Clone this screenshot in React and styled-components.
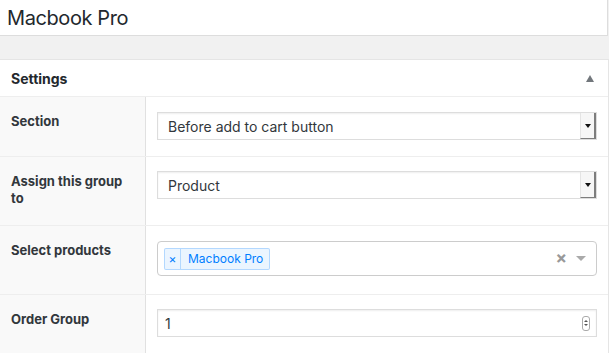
import React from "react";
import styled, { createGlobalStyle } from "styled-components";

const GlobalStyle = createGlobalStyle`
  html, body {
    margin: 0;
    padding: 0;
    background: #f1f1f1;
    font-family: Inter, "Noto Sans", "Liberation Sans", sans-serif;
    color: #23282d;
  }
`;

const Page = styled.div`
  width: 609px;
  height: 353px;
  overflow: hidden;
  background: #f1f1f1;
`;

const TitleBox = styled.div`
  height: 35px;
  margin-right: 1px;
  background: #fff;
  border: 1px solid #ddd;
  border-left: none;
  border-top: none;
  padding-left: 7px;
  display: flex;
  align-items: center;
  font-size: 20px;
  letter-spacing: -0.4px;
  color: #23282d;
`;

const Panel = styled.div`
  margin-top: 23px;
  background: #fff;
  border: 1px solid #e5e5e5;
  border-left: none;
  border-bottom: none;
`;

const PanelHeader = styled.div`
  height: 36px;
  padding: 0 11px;
  display: flex;
  align-items: center;
  justify-content: space-between;
  border-bottom: 1px solid #eee;
  font-size: 14px;
  font-weight: 700;
  color: #23282d;
`;

const Toggle = styled.span`
  width: 0;
  height: 0;
  margin-right: 3px;
  border-left: 4px solid transparent;
  border-right: 4px solid transparent;
  border-bottom: 7px solid #72777c;
`;

const Row = styled.div`
  display: grid;
  grid-template-columns: 146px 1fr;
  border-bottom: 1px solid #eee;
`;

const Label = styled.div`
  background: #f9f9f9;
  border-right: 1px solid #e1e1e1;
  padding: 16px 11px 18px;
  font-size: 13px;
  line-height: 17px;
  font-weight: 700;
  color: #32373c;
`;

const Field = styled.div`
  padding: ${(p) => p.$top ?? 15}px 11px ${(p) => p.$bottom ?? 16}px;
`;

const SelectBox = styled.div`
  height: 26px;
  border: 1px solid #ddd;
  box-shadow: inset 0 1px 2px rgba(0, 0, 0, 0.07);
  display: flex;
  align-items: center;
  font-size: 14px;
  color: #32373c;
`;

const SelectText = styled.span`
  flex: 1;
  padding-left: 10px;
`;

const SelectArrow = styled.span`
  width: 13px;
  height: 25px;
  align-self: flex-start;
  background: #f6f6f6;
  border-right: 2px solid #7d7d7d;
  border-bottom: 1px solid #7d7d7d;
  border-left: 1px solid #e4e4e4;
  display: flex;
  align-items: center;
  justify-content: center;
  &::after {
    content: "";
    border-left: 3px solid transparent;
    border-right: 3px solid transparent;
    border-top: 4px solid #111;
  }
`;

const MultiSelect = styled.div`
  height: 33px;
  border: 1px solid #ccc;
  border-radius: 4px;
  display: flex;
  align-items: center;
  padding: 0 10px 0 6px;
  gap: 8px;
`;

const Tag = styled.div`
  display: flex;
  height: 20px;
  background: rgba(0, 126, 255, 0.08);
  border: 1px solid rgba(0, 126, 255, 0.24);
  border-radius: 2px;
  color: #007eff;
  font-size: 12px;
  line-height: 20px;
`;

const TagRemove = styled.span`
  width: 15px;
  text-align: center;
  border-right: 1px solid rgba(0, 126, 255, 0.24);
  font-size: 12px;
`;

const TagLabel = styled.span`
  padding: 0 6px 0 7px;
`;

const Spacer = styled.div`
  flex: 1;
`;

const Clear = styled.span`
  color: #999;
  font-size: 17px;
  font-weight: 700;
  line-height: 1;
`;

const Caret = styled.span`
  border-left: 5px solid transparent;
  border-right: 5px solid transparent;
  border-top: 5px solid #aaa;
  margin-left: 1px;
`;

const NumberInput = styled.div`
  height: 26px;
  border: 1px solid #ddd;
  box-shadow: inset 0 1px 2px rgba(0, 0, 0, 0.07);
  display: flex;
  align-items: center;
  padding: 0 6px 0 7px;
  font-size: 14px;
  color: #32373c;
`;

const Spinner = styled.span`
  width: 6px;
  height: 13px;
  border: 1px solid #aaa;
  border-radius: 3px;
  display: flex;
  flex-direction: column;
  align-items: center;
  justify-content: center;
  gap: 2px;
  &::before,
  &::after {
    content: "";
    border-left: 2px solid transparent;
    border-right: 2px solid transparent;
  }
  &::before {
    border-bottom: 2px solid #555;
  }
  &::after {
    border-top: 2px solid #555;
  }
`;

const Select = ({ value }) => (
  <SelectBox>
    <SelectText>{value}</SelectText>
    <SelectArrow />
  </SelectBox>
);

export default function App() {
  return (
    <Page>
      <GlobalStyle />
      <TitleBox>Macbook Pro</TitleBox>
      <Panel>
        <PanelHeader>
          Settings
          <Toggle />
        </PanelHeader>
        <Row>
          <Label>Section</Label>
          <Field>
            <Select value="Before add to cart button" />
          </Field>
        </Row>
        <Row>
          <Label>Assign this group to</Label>
          <Field $top={14}>
            <Select value="Product" />
          </Field>
        </Row>
        <Row>
          <Label>Select products</Label>
          <Field $bottom={18}>
            <MultiSelect>
              <Tag>
                <TagRemove>×</TagRemove>
                <TagLabel>Macbook Pro</TagLabel>
              </Tag>
              <Spacer />
              <Clear>×</Clear>
              <Caret />
            </MultiSelect>
          </Field>
        </Row>
        <Row>
          <Label>Order Group</Label>
          <Field $top={14}>
            <NumberInput>
              <Spacer as="span">1</Spacer>
              <Spinner />
            </NumberInput>
          </Field>
        </Row>
      </Panel>
    </Page>
  );
}
